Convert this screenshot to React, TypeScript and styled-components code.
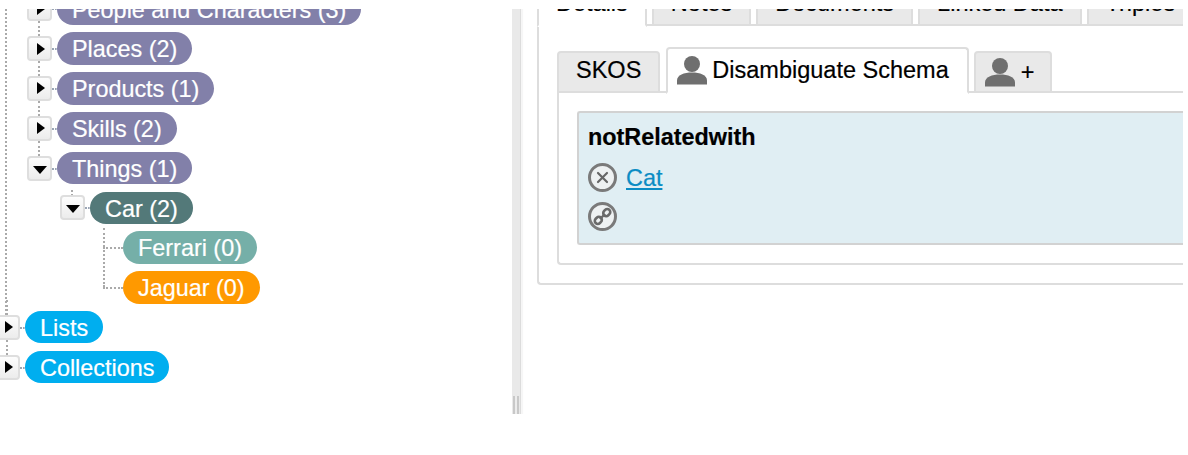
import React from "react";
import styled, { createGlobalStyle, css } from "styled-components";

const Global = createGlobalStyle`
  html, body { margin: 0; padding: 0; background: #fff; }
  body { font-family: "Liberation Sans", Arial, sans-serif; color: #000; -webkit-text-stroke: 0.2px; }
`;

const Page = styled.div`
  width: 1183px;
  height: 414px;
  padding-top: 9px;
  box-sizing: border-box;
`;
const Viewport = styled.div`
  display: flex;
  height: 405px;
  overflow: hidden;
`;
const TreePane = styled.div`
  width: 512px;
  flex: none;
  overflow: hidden;
`;
const Tree = styled.ul`
  position: relative;
  list-style: none;
  margin: -16.4px 0 0;
  padding: 0;
  display: flex;
  flex-direction: column;
  gap: 7.3px;
  &::before {
    content: "";
    position: absolute;
    left: 5px;
    top: 16px;
    height: 306px;
    border-left: 2px dotted #aaa;
  }
`;
const Row = styled.li<{ $indent: number; $stub?: number }>`
  position: relative;
  display: flex;
  align-items: center;
  height: 32.5px;
  margin-left: ${(p) => p.$indent}px;
  ${(p) =>
    p.$stub
      ? css`
          &::before {
            content: "";
            position: absolute;
            left: 11px;
            top: ${4 - p.$stub}px;
            height: ${p.$stub}px;
            border-left: 2px dotted #aaa;
          }
        `
      : ""}
`;
const LeafRow = styled.li<{ $rise: number }>`
  position: relative;
  display: flex;
  align-items: center;
  height: 32.5px;
  margin-left: 103px;
  padding-left: 20px;
  &::before {
    content: "";
    position: absolute;
    left: 0;
    top: ${(p) => 16 - p.$rise}px;
    height: ${(p) => p.$rise}px;
    border-left: 2px dotted #aaa;
  }
  &::after {
    content: "";
    position: absolute;
    left: 0;
    width: 20px;
    top: 16px;
    border-top: 2px dotted #aaa;
  }
`;
const Toggle = styled.span`
  position: relative;
  flex: none;
  width: 25px;
  height: 25px;
  box-sizing: border-box;
  border: 2px solid #dedede;
  border-radius: 4px;
  background: linear-gradient(#fdfdfd, #ececec);
  display: flex;
  align-items: center;
  justify-content: center;
  margin-right: 5px;
  &::after {
    content: "";
    position: absolute;
    right: -7px;
    top: 10px;
    width: 5px;
    border-top: 2px dotted #9aa5b5;
  }
`;
const Arrow = styled.i<{ $open?: boolean }>`
  display: block;
  width: 0;
  height: 0;
  ${(p) =>
    p.$open
      ? css`
          border-left: 7px solid transparent;
          border-right: 7px solid transparent;
          border-top: 8px solid #000;
          margin-top: 3px;
        `
      : css`
          border-top: 6.5px solid transparent;
          border-bottom: 6.5px solid transparent;
          border-left: 8px solid #000;
          margin-left: 2px;
        `}
`;
const Pill = styled.span<{ $bg: string }>`
  display: inline-block;
  height: 32.5px;
  line-height: 34px;
  padding: 0 15px;
  border-radius: 16.5px;
  background: ${(p) => p.$bg};
  color: #fff;
  font-size: 23.4px;
  white-space: nowrap;
`;

const Splitter = styled.div`
  position: relative;
  width: 8px;
  flex: none;
  background: #e9e9e9;
  border-right: 1px solid #dcdcdc;
  margin-right: 16px;
  box-shadow: 2px 0 1px #f6f6f6;
`;
const Grip = styled.div`
  position: absolute;
  left: 0;
  right: 0;
  bottom: 0;
  height: 18px;
  background: #fff;
  border-left: 2px solid #c8c8c8;
  border-right: 2px solid #c8c8c8;
  box-sizing: border-box;
  margin: 0 1px;
  &::before {
    content: "";
    position: absolute;
    inset: 0;
    background: #ececec;
  }
`;

const DetailPane = styled.div`
  flex: 1;
  min-width: 0;
  overflow: hidden;
`;
const TabStrip = styled.div<{ $outer?: boolean }>`
  display: flex;
  align-items: flex-end;
  position: relative;
  z-index: 1;
  gap: 5px;
  height: 47px;
  margin-top: ${(p) => (p.$outer ? "-30px" : "20px")};
`;
const Tab = styled.div<{ $active?: boolean }>`
  flex: none;
  display: flex;
  align-items: center;
  box-sizing: border-box;
  font-size: 23.5px;
  white-space: nowrap;
  border: 2px solid #ddd;
  border-radius: 4px 4px 0 0;
  background: ${(p) => (p.$active ? "#fff" : "#e9e9e9")};
  padding: 0 17px ${(p) => (p.$active ? 0 : 3)}px;
  height: ${(p) => (p.$active ? 47 : 42)}px;
  ${(p) =>
    p.$active
      ? css`
          border-bottom-color: #fff;
          margin-bottom: -1px;
        `
      : ""}
`;
const IconTab = styled(Tab)`
  padding: 0 18px 0 9px;
  gap: 5px;
  margin-left: ${(p) => (p.$active ? 1 : 0)}px;
`;
const Plus = styled.span`
  margin-left: 1px;
  margin-right: -2px;
`;
const OuterPanel = styled.div`
  box-sizing: border-box;
  border: 2px solid #ddd;
  border-right: 0;
  border-radius: 0 0 0 4px;
  margin-top: -2px;
  height: 261px;
  padding-left: 18px;
`;
const InnerPanel = styled.div`
  box-sizing: border-box;
  border: 2px solid #ddd;
  border-right: 0;
  border-radius: 0 0 0 4px;
  margin-top: -2px;
  height: 174px;
  padding: 18px 0 0 18px;
`;
const FieldBox = styled.div`
  box-sizing: border-box;
  height: 134px;
  background: #e0eef3;
  border: 2px solid #d2d2d2;
  border-right: 0;
  border-radius: 3px 0 0 3px;
  padding: 9px 0 0 9px;
`;
const FieldTitle = styled.div`
  font-weight: 700;
  font-size: 23.4px;
  line-height: 30px;
  margin-bottom: 11px;
`;
const FieldRow = styled.div`
  display: flex;
  align-items: center;
  gap: 9px;
  height: 29px;
  margin-bottom: 10px;
`;
const CatLink = styled.a`
  font-size: 23.4px;
  margin-top: 2px;
  color: #0b8cc4;
  text-decoration: underline;
`;

const UserIcon = () => (
  <svg width="30" height="29" viewBox="0 0 30 29" fill="#6f6f6f" style={{ flex: "none" }}>
    <circle cx="15" cy="8" r="8" />
    <path d="M0 28.5v-4C0 19 7 16.5 15 16.5S30 19 30 24.5v4z" />
  </svg>
);
const RemoveIcon = () => (
  <svg width="29" height="29" viewBox="0 0 29 29">
    <circle cx="14.5" cy="14.5" r="13" fill="#eef1f2" stroke="#7a7a7a" strokeWidth="3" />
    <path d="M10 10l9 9M19 10l-9 9" stroke="#666" strokeWidth="2.2" strokeLinecap="round" />
  </svg>
);
const ChainIcon = () => (
  <svg width="29" height="29" viewBox="0 0 29 29">
    <circle cx="14.5" cy="14.5" r="13" fill="#eef1f2" stroke="#7a7a7a" strokeWidth="3" />
    <g fill="none" stroke="#6a6a6a" strokeWidth="2.6">
      <rect x="15" y="7.6" width="7.5" height="6" rx="3" transform="rotate(-45 18.7 10.6)" />
      <rect x="6.6" y="15.4" width="7.5" height="6" rx="3" transform="rotate(-45 10.3 18.4)" />
    </g>
    <path d="M12 17l5-5" stroke="#6a6a6a" strokeWidth="2.4" />
  </svg>
);

const PURPLE = "#8280a9";
const BLUE = "#00aeef";

const Branch = ({
  indent,
  stub,
  open,
  bg,
  label,
}: {
  indent: number;
  stub: number;
  open?: boolean;
  bg: string;
  label: string;
}) => (
  <Row $indent={indent} $stub={stub}>
    <Toggle>
      <Arrow $open={open} />
    </Toggle>
    <Pill $bg={bg}>{label}</Pill>
  </Row>
);

export default function App() {
  return (
    <Page>
      <Global />
      <Viewport>
        <TreePane>
          <Tree>
            <Branch indent={27} stub={15} bg={PURPLE} label="People and Characters (3)" />
            <Branch indent={27} stub={15} bg={PURPLE} label="Places (2)" />
            <Branch indent={27} stub={15} bg={PURPLE} label="Products (1)" />
            <Branch indent={27} stub={15} bg={PURPLE} label="Skills (2)" />
            <Branch indent={27} stub={15} open bg={PURPLE} label="Things (1)" />
            <Branch indent={60} stub={6} open bg="#537979" label="Car (2)" />
            <LeafRow $rise={19}>
              <Pill $bg="#75afa8">Ferrari (0)</Pill>
            </LeafRow>
            <LeafRow $rise={40}>
              <Pill $bg="#ff9900">Jaguar (0)</Pill>
            </LeafRow>
            <Branch indent={-5} stub={15} bg={BLUE} label="Lists" />
            <Branch indent={-5} stub={15} bg={BLUE} label="Collections" />
          </Tree>
        </TreePane>
        <Splitter>
          <Grip />
        </Splitter>
        <DetailPane>
          <TabStrip $outer>
            <Tab $active>Details</Tab>
            <Tab>Notes</Tab>
            <Tab>Documents</Tab>
            <Tab>Linked Data</Tab>
            <Tab>Triples</Tab>
          </TabStrip>
          <OuterPanel>
            <TabStrip>
              <Tab>SKOS</Tab>
              <IconTab $active>
                <UserIcon />
                Disambiguate Schema
              </IconTab>
              <IconTab>
                <UserIcon />
                <Plus>+</Plus>
              </IconTab>
            </TabStrip>
            <InnerPanel>
              <FieldBox>
                <FieldTitle>notRelatedwith</FieldTitle>
                <FieldRow>
                  <RemoveIcon />
                  <CatLink href="#">Cat</CatLink>
                </FieldRow>
                <FieldRow>
                  <ChainIcon />
                </FieldRow>
              </FieldBox>
            </InnerPanel>
          </OuterPanel>
        </DetailPane>
      </Viewport>
    </Page>
  );
}
